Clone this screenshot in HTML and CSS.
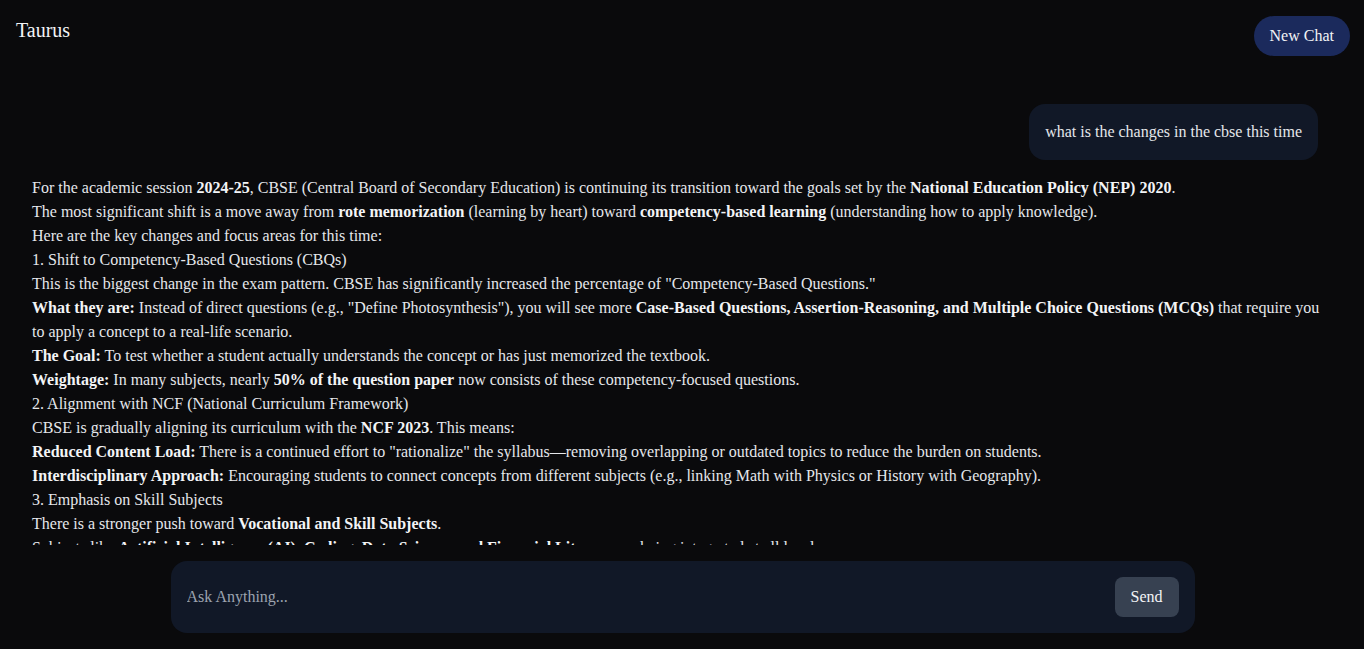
FILE: index.html
```html
<!DOCTYPE html>
<html lang="en">
<head>
<meta charset="utf-8">
<title>Taurus</title>
<link rel="stylesheet" href="styles.css">
</head>
<body>
<div class="app">
  <header class="topbar">
    <div class="brand">Taurus</div>
    <button class="new-chat">New Chat</button>
  </header>
  <main class="chat">
    <div class="user-row">
      <div class="user-bubble">what is the changes in the cbse this time</div>
    </div>
    <div class="assistant">
      <p>For the academic session <b>2024-25</b>, CBSE (Central Board of Secondary Education) is continuing its transition toward the goals set by the <b>National Education Policy (NEP) 2020</b>.</p>
      <p>The most significant shift is a move away from <b>rote memorization</b> (learning by heart) toward <b>competency-based learning</b> (understanding how to apply knowledge).</p>
      <p>Here are the key changes and focus areas for this time:</p>
      <p>1. Shift to Competency-Based Questions (CBQs)</p>
      <p>This is the biggest change in the exam pattern. CBSE has significantly increased the percentage of "Competency-Based Questions."</p>
      <p><b>What they are:</b> Instead of direct questions (e.g., "Define Photosynthesis"), you will see more <b>Case-Based Questions, Assertion-Reasoning, and Multiple Choice Questions (MCQs)</b> that require you to apply a concept to a real-life scenario.</p>
      <p><b>The Goal:</b> To test whether a student actually understands the concept or has just memorized the textbook.</p>
      <p><b>Weightage:</b> In many subjects, nearly <b>50% of the question paper</b> now consists of these competency-focused questions.</p>
      <p>2. Alignment with NCF (National Curriculum Framework)</p>
      <p>CBSE is gradually aligning its curriculum with the <b>NCF 2023</b>. This means:</p>
      <p><b>Reduced Content Load:</b> There is a continued effort to "rationalize" the syllabus—removing overlapping or outdated topics to reduce the burden on students.</p>
      <p><b>Interdisciplinary Approach:</b> Encouraging students to connect concepts from different subjects (e.g., linking Math with Physics or History with Geography).</p>
      <p>3. Emphasis on Skill Subjects</p>
      <p>There is a stronger push toward <b>Vocational and Skill Subjects</b>.</p>
      <p>Subjects like <b>Artificial Intelligence (AI), Coding, Data Science, and Financial Literacy</b> are being integrated at all levels.</p>
      <p>4. Focus on Continuous Assessment</p>
      <p>Internal assessments, projects and practical work now carry more importance in the final evaluation.</p>
    </div>
  </main>
  <footer class="composer-wrap">
    <form class="composer">
      <input class="composer-input" type="text" placeholder="Ask Anything..." autofocus>
      <button class="send" type="button">Send</button>
    </form>
  </footer>
</div>
</body>
</html>
```

FILE: styles.css
```css
* { box-sizing: border-box; }
html, body {
  margin: 0;
  height: 100%;
  background: #0a0a0c;
  color: #e5e7eb;
  font-family: "Liberation Serif", "Times New Roman", serif;
  font-size: 16px;
}
.app {
  height: 100vh;
  display: flex;
  flex-direction: column;
  overflow: hidden;
}
.topbar {
  display: flex;
  justify-content: space-between;
  align-items: flex-start;
  padding: 16px 14px 16px 16px;
  flex-shrink: 0;
}
.brand {
  font-size: 20px;
  line-height: 28px;
  color: #f3f4f6;
}
.new-chat {
  height: 40px;
  padding: 0 16px;
  border: none;
  border-radius: 20px;
  background: #1b2a5c;
  color: #f3f4f6;
  font-family: inherit;
  font-size: 16px;
}
.chat {
  flex: 1;
  min-height: 0;
  overflow: hidden;
  padding: 32px 32px 0 32px;
  display: flex;
  flex-direction: column;
  gap: 16px;
}
.user-row {
  display: flex;
  justify-content: flex-end;
  padding-right: 14px;
}
.user-bubble {
  background: #111827;
  border-radius: 16px;
  padding: 16px;
  line-height: 24px;
  color: #e5e7eb;
}
.assistant p {
  margin: 0;
  line-height: 24px;
}
.assistant b { color: #f3f4f6; }
.composer-wrap {
  flex-shrink: 0;
  padding: 16px 0;
  display: flex;
  justify-content: center;
}
.composer {
  width: 1024px;
  margin: 0 0 0 1px;
  height: 72px;
  background: #111827;
  border-radius: 16px;
  padding: 16px;
  display: flex;
  align-items: center;
  gap: 16px;
}
.composer-input {
  flex: 1;
  background: transparent;
  border: none;
  outline: none;
  color: #e5e7eb;
  font-family: inherit;
  font-size: 16px;
  padding: 0;
}
.composer-input::placeholder { color: #9ca3af; }
.send {
  height: 40px;
  padding: 0 16px;
  border: none;
  border-radius: 8px;
  background: #374151;
  color: #f3f4f6;
  font-family: inherit;
  font-size: 16px;
}
```
